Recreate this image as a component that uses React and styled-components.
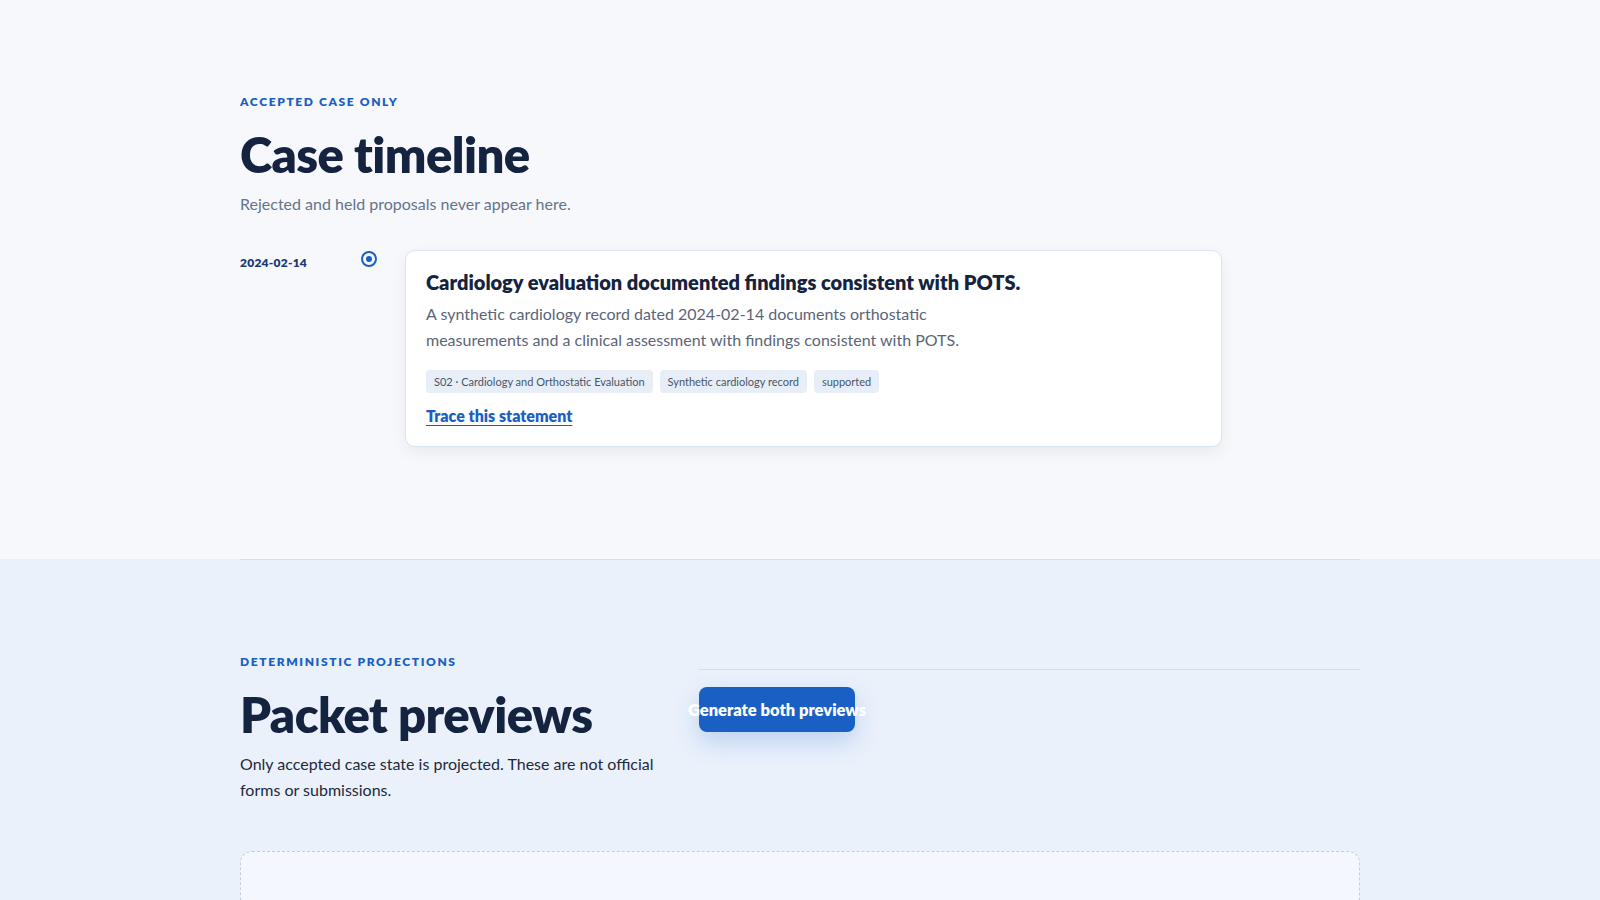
import React from "react";
import styled, { createGlobalStyle } from "styled-components";

const GlobalStyle = createGlobalStyle`
  * { box-sizing: border-box; }
  body {
    margin: 0;
    background: #f6f8fc;
    font-family: Lato, "Noto Sans", "Liberation Sans", sans-serif;
    color: #14233f;
  }
`;

const TimelineSection = styled.section`
  background: #f6f8fc;
  padding: 94px 0 112px;
`;

const PreviewSection = styled.section`
  background: #eaf1fb;
  min-height: 400px;
`;

const Container = styled.div`
  width: 1120px;
  margin: 0 auto;
`;

const PreviewContainer = styled(Container)`
  border-top: 1px solid #d3deec;
  padding-top: 94px;
`;

const Eyebrow = styled.p`
  margin: 0;
  font-size: 12px;
  line-height: 16px;
  font-weight: 800;
  letter-spacing: 0.135em;
  text-transform: uppercase;
  color: #1a5fc4;
`;

const Title = styled.h1`
  margin: 15px 0 0;
  font-size: 49px;
  line-height: 58px;
  font-weight: 800;
  letter-spacing: -0.012em;
  color: #14233f;
`;

const Lead = styled.p`
  margin: 8px 0 0;
  font-size: 16px;
  line-height: 26px;
  color: ${(p) => (p.$dark ? "#1e293b" : "#64748b")};
`;

const TimelineList = styled.ol`
  list-style: none;
  margin: 33px 0 0;
  padding: 0;
  max-width: 982px;
`;

const TimelineItem = styled.li`
  display: grid;
  grid-template-columns: 93px 16px 1fr;
  column-gap: 28px;
  align-items: start;
`;

const DateLabel = styled.time`
  margin-top: 4px;
  font-size: 12px;
  line-height: 18px;
  font-weight: 800;
  letter-spacing: 0.02em;
  color: #1b3a78;
`;

const Marker = styled.span`
  margin-top: 1px;
  width: 16px;
  height: 16px;
  border-radius: 50%;
  border: 2px solid #1a5fc4;
  display: flex;
  align-items: center;
  justify-content: center;

  &::after {
    content: "";
    width: 6px;
    height: 6px;
    border-radius: 50%;
    background: #1a5fc4;
  }
`;

const Card = styled.article`
  background: #ffffff;
  border: 1px solid #dbe4ef;
  border-radius: 10px;
  padding: 18px 20px 20px;
  box-shadow: 0 6px 16px rgba(15, 23, 42, 0.06);
`;

const CardTitle = styled.h3`
  margin: 0;
  font-size: 20px;
  line-height: 26px;
  font-weight: 800;
  color: #14233f;
`;

const CardBody = styled.p`
  margin: 6px 0 0;
  max-width: 560px;
  font-size: 16px;
  line-height: 26px;
  color: #5b6577;
`;

const Tags = styled.div`
  display: flex;
  gap: 7px;
  margin-top: 17px;
`;

const Tag = styled.span`
  display: inline-flex;
  align-items: center;
  height: 23px;
  padding: 0 8px;
  border-radius: 4px;
  background: #e8eef7;
  color: #475569;
  font-size: 11px;
`;

const TraceLink = styled.a`
  display: inline-block;
  margin-top: 13px;
  font-size: 16px;
  line-height: 20px;
  font-weight: 800;
  color: #1a5fc4;
  text-decoration: underline;
  text-underline-offset: 3px;
  cursor: pointer;
`;

const PreviewHeader = styled.div`
  display: grid;
  grid-template-columns: 420px 1fr;
  column-gap: 39px;
  align-items: start;
`;

const Actions = styled.div`
  margin-top: 15px;
  padding-top: 17px;
  border-top: 1px solid #d3deec;
`;

const PrimaryButton = styled.button`
  width: 156px;
  height: 45px;
  display: flex;
  align-items: center;
  justify-content: center;
  white-space: nowrap;
  border: none;
  border-radius: 8px;
  background: #1a60c4;
  color: #ffffff;
  font-family: inherit;
  font-size: 16.5px;
  font-weight: 800;
  box-shadow: 0 10px 24px rgba(26, 96, 196, 0.22);
  cursor: pointer;
`;

const PreviewArea = styled.div`
  margin-top: 48px;
  height: 220px;
  border: 1px dashed #c3cedd;
  border-radius: 12px;
  background: #f4f8fe;
`;

const tags = [
  "S02 · Cardiology and Orthostatic Evaluation",
  "Synthetic cardiology record",
  "supported",
];

export default function App() {
  return (
    <>
      <GlobalStyle />
      <TimelineSection>
        <Container>
          <Eyebrow>Accepted case only</Eyebrow>
          <Title>Case timeline</Title>
          <Lead>Rejected and held proposals never appear here.</Lead>
          <TimelineList>
            <TimelineItem>
              <DateLabel>2024-02-14</DateLabel>
              <Marker />
              <Card>
                <CardTitle>
                  Cardiology evaluation documented findings consistent with POTS.
                </CardTitle>
                <CardBody>
                  A synthetic cardiology record dated 2024-02-14 documents
                  orthostatic measurements and a clinical assessment with
                  findings consistent with POTS.
                </CardBody>
                <Tags>
                  {tags.map((t) => (
                    <Tag key={t}>{t}</Tag>
                  ))}
                </Tags>
                <TraceLink>Trace this statement</TraceLink>
              </Card>
            </TimelineItem>
          </TimelineList>
        </Container>
      </TimelineSection>
      <PreviewSection>
        <PreviewContainer>
          <PreviewHeader>
            <div>
              <Eyebrow>Deterministic projections</Eyebrow>
              <Title>Packet previews</Title>
              <Lead $dark>
                Only accepted case state is projected. These are not official
                forms or submissions.
              </Lead>
            </div>
            <Actions>
              <PrimaryButton type="button">Generate both previews</PrimaryButton>
            </Actions>
          </PreviewHeader>
          <PreviewArea />
        </PreviewContainer>
      </PreviewSection>
    </>
  );
}
